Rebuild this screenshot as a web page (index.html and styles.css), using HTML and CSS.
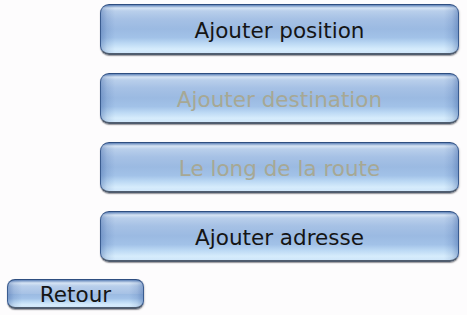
FILE: index.html
```html
<!DOCTYPE html>
<html>
<head>
<meta charset="utf-8">
<link rel="stylesheet" href="styles.css">
</head>
<body>
<div class="screen">
  <div class="menu">
    <div class="btn big">Ajouter position</div>
    <div class="btn big disabled">Ajouter destination</div>
    <div class="btn big disabled">Le long de la route</div>
    <div class="btn big">Ajouter adresse</div>
  </div>
  <div class="btn back">Retour</div>
</div>
</body>
</html>
```
FILE: styles.css
```css
html, body {
  margin: 0;
  padding: 0;
  background: #fdfcfd;
}
.screen {
  width: 467px;
  height: 315px;
  position: relative;
  overflow: hidden;
}
.menu {
  display: flex;
  flex-direction: column;
  gap: 18px;
  padding: 4px 0 0 100px;
}
.btn {
  box-sizing: border-box;
  display: flex;
  align-items: center;
  justify-content: center;
  font-family: "DejaVu Sans", Verdana, sans-serif;
  font-size: 21.5px;
  color: #151515;
  border: 1px solid #3a5c90;
  border-top-color: #2e4e80;
  border-bottom: 2px solid #4f5c6e;
  border-radius: 9px;
  background:
    linear-gradient(90deg,
      rgba(40,80,150,0.35) 0,
      rgba(40,80,150,0.12) 6px,
      rgba(40,80,150,0) 14px,
      rgba(40,80,150,0) calc(100% - 14px),
      rgba(40,80,150,0.12) calc(100% - 6px),
      rgba(40,80,150,0.35) 100%),
    linear-gradient(180deg,
      #5e82b8 0px,
      #d6e4f4 3px,
      #b9cfeb 6px,
      #a6c1e5 14px,
      #9bbae2 50%,
      #a2c2e8 68%,
      #bcd9f4 80%,
      #d6ecfc 92%,
      #cfe6fa 100%);
  box-shadow: 0 1px 1px rgba(60,60,70,0.45), 1px 1px 2px rgba(0,0,0,0.12);
}
.big {
  width: 359px;
  height: 51px;
  padding-top: 2px;
}
.disabled {
  color: #a7a894;
}
.back {
  width: 137px;
  height: 30px;
  margin: 17px 0 0 7px;
  border-radius: 8px;
  padding-top: 1px;
}
```
